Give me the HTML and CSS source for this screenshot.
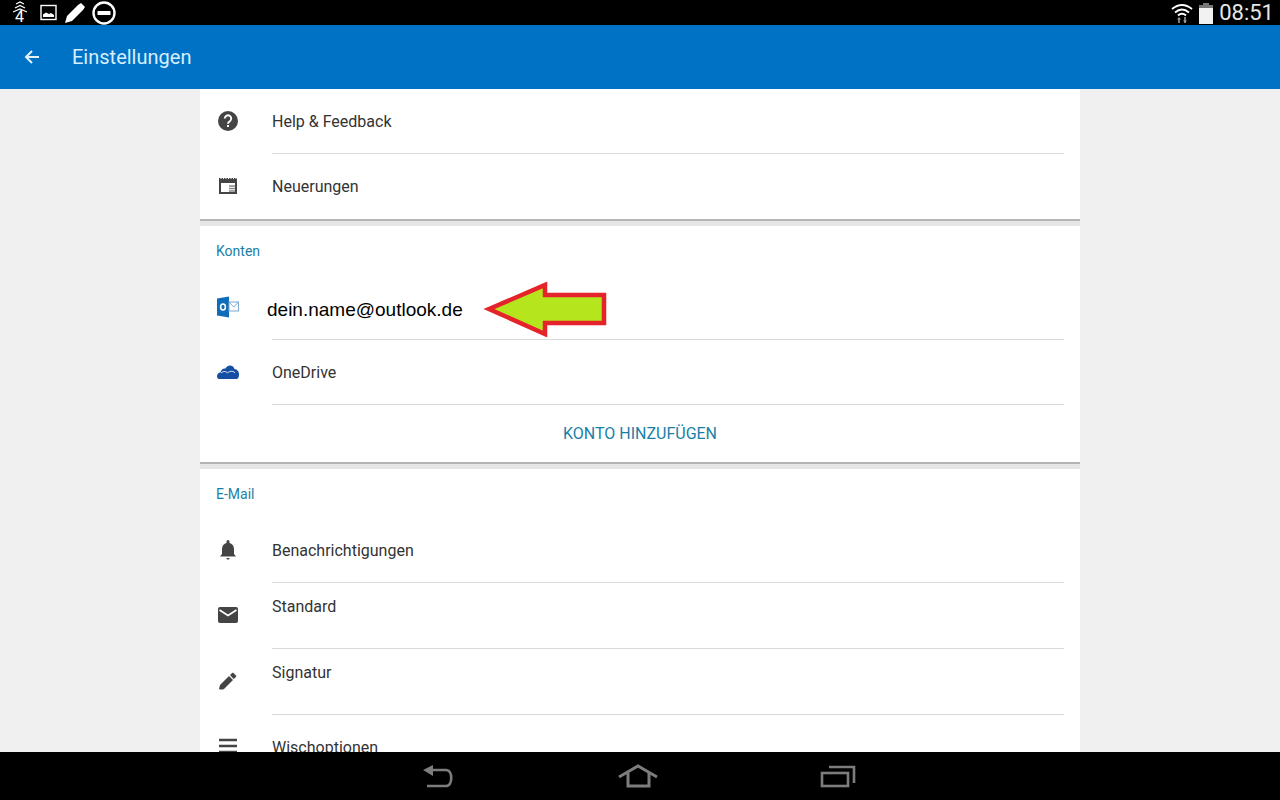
FILE: index.html
```html
<!DOCTYPE html>
<html lang="de">
<head>
  <meta charset="UTF-8" />
  <title>Einstellungen</title>
  <link rel="stylesheet" href="styles.css">
</head>
<body>

  <div class="status-bar">
    <div class="status-left">
      <div class="signal">
        <svg width="16" height="14" viewBox="0 0 16 14" fill="none" stroke="#fff" stroke-width="1.2">
          <path d="M4 3 L8 1 L12 3"/>
          <path d="M3 7 L8 4.5 L13 7"/>
          <path d="M1 11 L8 8 L15 11"/>
        </svg>
        <span class="signal-num">4</span>
      </div>
      <svg width="18" height="18" viewBox="0 0 18 18">
        <rect x="1" y="1.5" width="15" height="14" fill="none" stroke="#fff" stroke-width="1.4"/>
        <path d="M3 13 L3 10.5 L6 8.5 L9 10 L11 9 L14 11 L14 13 Z" fill="#fff"/>
      </svg>
      <svg width="22" height="22" viewBox="0 0 22 22">
        <path d="M1 21 L3 14 L14 3 L17 1 L21 5 L19 8 L8 19 Z" fill="#fff"/>
      </svg>
      <svg width="24" height="24" viewBox="0 0 24 24">
        <circle cx="12" cy="12" r="10.5" fill="none" stroke="#fff" stroke-width="2.4"/>
        <rect x="5.5" y="10" width="13" height="4" fill="#fff"/>
      </svg>
    </div>
    <div class="status-right">
      <svg width="22" height="22" viewBox="0 0 22 22" fill="none" stroke="#fff" stroke-width="2">
        <path d="M1 7 Q11 -1 21 7"/>
        <path d="M4 10.5 Q11 4.5 18 10.5"/>
        <path d="M7 13.5 Q11 10 15 13.5"/>
        <path d="M8 16 L8 21 M14 15 L14 21" stroke="#999" stroke-width="1.6"/>
        <path d="M6 17.5 L8 15 L10 17.5 Z M12 18.5 L14 21 L16 18.5 Z" fill="#999" stroke="none"/>
      </svg>
      <svg width="14" height="22" viewBox="0 0 14 22">
        <rect x="4" y="1" width="6" height="3" fill="#777"/>
        <rect x="0" y="3" width="14" height="3" fill="#777"/>
        <rect x="0" y="6" width="14" height="16" fill="#f2f2f2"/>
      </svg>
      <span class="clock">08:51</span>
    </div>
  </div>

  <div class="app-bar">
    <svg class="back-arrow" width="16" height="16" viewBox="0 0 16 16" fill="none" stroke="#e3f2fd" stroke-width="2">
      <path d="M15 8 L2 8"/>
      <path d="M8 2 L2 8 L8 14"/>
    </svg>
    <span class="app-title">Einstellungen</span>
  </div>

  <div class="main">
    <div class="column">

      <div class="card">
        <div class="row">
          <svg class="icon" width="24" height="24" viewBox="0 0 24 24">
            <circle cx="12" cy="12" r="10" fill="#444"/>
            <path d="M8.8 9.6 A3.2 3.2 0 1 1 13.8 12.2 C12.6 13 12 13.4 12 14.8" fill="none" stroke="#fff" stroke-width="1.9"/>
            <rect x="11" y="16" width="2" height="2" fill="#fff"/>
          </svg>
          <div class="row-text line">Help &amp; Feedback</div>
        </div>
        <div class="row">
          <svg class="icon" width="24" height="24" viewBox="0 0 24 24">
            <path d="M4 6 H20 V19 H4 Z" fill="none" stroke="#444" stroke-width="2"/>
            <path d="M3 5 H21" stroke="#444" stroke-width="2" stroke-dasharray="1.5 1"/>
            <rect x="3" y="6" width="18" height="3" fill="#444"/>
            <path d="M13 12 H19 M13 14.5 H19 M13 17 H19" stroke="#888" stroke-width="1.5"/>
          </svg>
          <div class="row-text">Neuerungen</div>
        </div>
      </div>

      <div class="card">
        <div class="section-label konten">Konten</div>
        <div class="row account">
          <svg class="icon icon-outlook" width="24" height="24" viewBox="0 0 24 24">
            <path d="M1 2.5 L13 0.5 V21.5 L1 19.5 Z" fill="#0f6cb8"/>
            <rect x="13" y="6" width="9.5" height="9" fill="#fff" stroke="#7fa9cc"/>
            <path d="M13 6 L17.7 11 L22.5 6" fill="none" stroke="#7fa9cc"/>
            <ellipse cx="7" cy="11" rx="2.4" ry="3" fill="none" stroke="#fff" stroke-width="1.6"/>
          </svg>
          <div class="row-text line account-text"><span class="account-name">dein.name@outlook.de</span></div>
        </div>
        <div class="row">
          <svg class="icon" width="24" height="24" viewBox="0 0 24 24">
            <path d="M1 16.5 C1 14 2.5 12.5 4.5 12.5 C5 9.5 7.5 8 9.5 8.5 C11.5 4.5 17 4.5 18.5 9 C21 9 23.5 12 23 15 C23 17 22 19 20.5 19 H3 C2 19 1 18 1 16.5 Z" fill="#154fa3"/>
            <path d="M5 13 C7 11 10 11 11.5 13 C14 10.5 18 11 19 13" fill="none" stroke="#fff" stroke-width="0.9"/>
          </svg>
          <div class="row-text line">OneDrive</div>
        </div>
        <div class="add-account">KONTO HINZUFÜGEN</div>
      </div>

      <div class="card">
        <div class="section-label mail">E-Mail</div>
        <div class="row">
          <svg class="icon" width="24" height="24" viewBox="0 0 24 24">
            <path d="M4 18.5 L6 16 V11 C6 7.5 8 5.5 10.5 5 V3.5 A1.5 1.5 0 0 1 13.5 3.5 V5 C16 5.5 18 7.5 18 11 V16 L20 18.5 Z" fill="#444"/>
            <path d="M10 20 H14 L12 22 Z" fill="#444"/>
          </svg>
          <div class="row-text line">Benachrichtigungen</div>
        </div>
        <div class="row row-top">
          <svg class="icon" width="24" height="24" viewBox="0 0 24 24">
            <rect x="2" y="4" width="20" height="16" rx="2" fill="#444"/>
            <path d="M3.5 7 L12 12.5 L20.5 7" fill="none" stroke="#fff" stroke-width="1.6"/>
          </svg>
          <div class="row-text line">Standard</div>
        </div>
        <div class="row row-top">
          <svg class="icon" width="24" height="24" viewBox="0 0 24 24">
            <path d="M3 20 L4 16 L13 7 L17 11 L8 20 Q5 21 3 20 Z" fill="#444"/>
            <path d="M15 5 L17 3.5 L20.5 7 L19 9 L17.5 10 L14 6 Z" fill="#444"/>
          </svg>
          <div class="row-text line">Signatur</div>
        </div>
        <div class="row">
          <svg class="icon" width="24" height="24" viewBox="0 0 24 24">
            <path d="M3 5 H21 M3 11 H21 M3 17 H21" stroke="#444" stroke-width="2.4"/>
          </svg>
          <div class="row-text">Wischoptionen</div>
        </div>
      </div>

    </div>

    <svg class="callout" width="130" height="62" viewBox="0 0 130 62">
      <path d="M8 29 L64 5 L64 15 L123 15 L123 43 L64 43 L64 54 Z" fill="#b5e61d" stroke="#e5232b" stroke-width="4.5"/>
    </svg>
  </div>

  <div class="nav-bar">
    <svg width="34" height="26" viewBox="0 0 34 26" fill="none" stroke="#7d7d7d" stroke-width="2.6">
      <path d="M8 8 H24 C31 8 31 24 24 24 H5"/>
      <path d="M1 8 L11 3 V14 Z" fill="#7d7d7d" stroke="none"/>
    </svg>
    <svg width="40" height="26" viewBox="0 0 40 26" fill="none" stroke="#7d7d7d" stroke-width="3">
      <path d="M1 15 L20 4 L39 15"/>
      <path d="M10 11 V24 H31 V11"/>
    </svg>
    <svg width="36" height="26" viewBox="0 0 36 26" fill="none" stroke="#7d7d7d" stroke-width="2.6">
      <rect x="2" y="11" width="26" height="13"/>
      <path d="M9 5 H34 V21"/>
    </svg>
  </div>

</body>
</html>
```

FILE: styles.css
```css
* {
  margin: 0;
  padding: 0;
  box-sizing: border-box;
}

html, body {
  height: 100%;
  overflow: hidden;
}

body {
  display: flex;
  flex-direction: column;
  font-family: Roboto, "Liberation Sans", sans-serif;
  background: #000;
}

.status-bar {
  height: 25px;
  flex-shrink: 0;
  background: #000;
  display: flex;
  align-items: center;
  justify-content: space-between;
  color: #fff;
  overflow: hidden;
}

.status-left {
  display: flex;
  align-items: center;
  gap: 6px;
  padding-left: 12px;
}

.signal {
  position: relative;
  width: 22px;
  height: 25px;
}

.signal-num {
  position: absolute;
  left: 3px;
  top: 9px;
  font-size: 16px;
  line-height: 15px;
}

.status-right {
  display: flex;
  align-items: center;
  gap: 6px;
  padding-right: 6px;
}

.clock {
  font-size: 22px;
  color: #e6e6e6;
}

.app-bar {
  height: 64px;
  flex-shrink: 0;
  background: #0072c6;
  display: flex;
  align-items: center;
  padding-left: 24px;
}

.back-arrow {
  margin-right: 32px;
}

.app-title {
  font-size: 20px;
  color: #d6eeff;
}

.main {
  position: relative;
  height: 663px;
  flex-shrink: 0;
  background: #f0f0f0;
  overflow: hidden;
}

.column {
  width: 880px;
  margin: 0 auto;
  background: #e6e6e6;
  display: flex;
  flex-direction: column;
  gap: 5px;
}

.card {
  background: #fff;
  border-bottom: 2px solid #b4b4b4;
}

.card:last-child {
  border-bottom: none;
}

.row {
  display: flex;
  height: 65px;
  color: #333;
  font-size: 16px;
}

.row-top {
  height: 66px;
}

.row-top .row-text {
  align-items: flex-start;
  padding-top: 14px;
}

.account {
  height: 63px;
}

.icon {
  flex-shrink: 0;
  margin: 20px 32px 0 16px;
}

.icon-outlook {
  margin-top: 19px;
}

.row-text {
  flex: 1;
  display: flex;
  align-items: center;
  margin-right: 16px;
}

.line {
  border-bottom: 1px solid #d9d9d9;
}

.account-text {
  position: relative;
}

.account-name {
  position: absolute;
  left: -5px;
  top: 22px;
  font-family: "Liberation Sans", Arial, sans-serif;
  font-size: 19px;
  line-height: 22px;
  color: #000;
}

.section-label {
  font-size: 14px;
  color: #1a7fa8;
  padding: 17px 0 0 16px;
}

.konten {
  height: 51px;
}

.mail {
  height: 49px;
}

.add-account {
  height: 57px;
  display: flex;
  align-items: center;
  justify-content: center;
  font-size: 16px;
  color: #1a7fa8;
}

/* red arrow drawn over the screenshot */
.callout {
  position: absolute;
  left: 481px;
  top: 191px;
}

.nav-bar {
  height: 48px;
  flex-shrink: 0;
  background: #000;
  display: flex;
  align-items: center;
  justify-content: center;
  gap: 162px;
  padding: 0 2px 2px 0;
}
```
